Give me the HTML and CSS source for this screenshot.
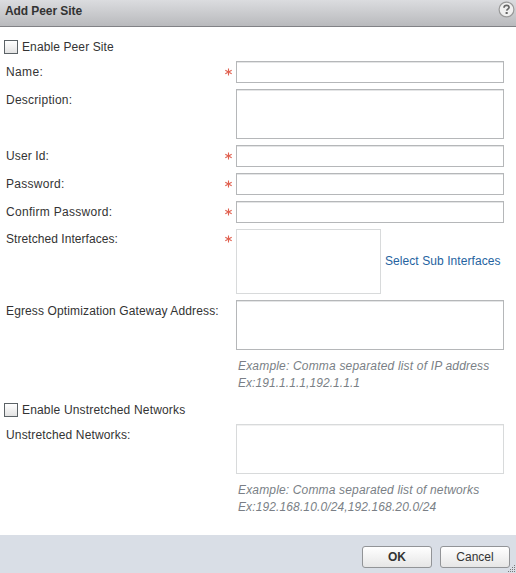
FILE: index.html
```html
<!DOCTYPE html>
<html lang="en">
<head>
<meta charset="utf-8">
<title>Add Peer Site</title>
<link rel="stylesheet" href="styles.css">
</head>
<body>
<div class="dialog">
  <header class="titlebar">
    <h1><span class="title">Add Peer Site</span></h1>
    <svg class="help" width="17" height="17" viewBox="0 0 17 17" aria-label="Help"><circle cx="8.5" cy="8.5" r="7.4" fill="#f0f0f0" stroke="#999" stroke-width="1.2"/><path d="M6 6.7C6.1 4.9 7.2 4.4 8.6 4.4C10.2 4.4 11.1 5.1 11.1 6.3C11.1 8.1 8.9 8.1 8.7 9.7" fill="none" stroke="#666" stroke-width="1.7"/><path d="M7.6 11h2.1v2H7.6z" fill="#666"/></svg>
  </header>
  <main class="form">
    <label class="check"><span class="box"></span><span class="t-enable">Enable Peer Site</span></label>
    <div class="row"><span class="label"><span class="t-name">Name:</span></span><svg class="req" width="7" height="8" viewBox="0 0 7 8"><path d="M3.5 .5v7M.3 2.3l6.4 3.4M6.7 2.3L.3 5.7"/></svg><div class="field"></div></div>
    <div class="row"><span class="label"><span class="t-desc">Description:</span></span><div class="field area"></div></div>
    <div class="row"><span class="label"><span class="t-user">User Id:</span></span><svg class="req" width="7" height="8" viewBox="0 0 7 8"><path d="M3.5 .5v7M.3 2.3l6.4 3.4M6.7 2.3L.3 5.7"/></svg><div class="field"></div></div>
    <div class="row"><span class="label"><span class="t-pass">Password:</span></span><svg class="req" width="7" height="8" viewBox="0 0 7 8"><path d="M3.5 .5v7M.3 2.3l6.4 3.4M6.7 2.3L.3 5.7"/></svg><div class="field"></div></div>
    <div class="row"><span class="label"><span class="t-confirm">Confirm Password:</span></span><svg class="req" width="7" height="8" viewBox="0 0 7 8"><path d="M3.5 .5v7M.3 2.3l6.4 3.4M6.7 2.3L.3 5.7"/></svg><div class="field"></div></div>
    <div class="row interfaces"><span class="label"><span class="t-stretched">Stretched Interfaces:</span></span><svg class="req" width="7" height="8" viewBox="0 0 7 8"><path d="M3.5 .5v7M.3 2.3l6.4 3.4M6.7 2.3L.3 5.7"/></svg><div class="field list"></div><a class="link"><span class="t-select">Select Sub Interfaces</span></a></div>
    <div class="row"><span class="label"><span class="t-egress">Egress Optimization Gateway Address:</span></span><div class="field area"></div></div>
    <div class="hint"><p><span class="t-hint1">Example: Comma separated list of IP address</span></p><p><span class="t-hint2">Ex:191.1.1.1,192.1.1.1</span></p></div>
    <label class="check second"><span class="box"></span><span class="t-enable2">Enable Unstretched Networks</span></label>
    <div class="row"><span class="label"><span class="t-unstretched">Unstretched Networks:</span></span><div class="field area disabled"></div></div>
    <div class="hint"><p><span class="t-hint3">Example: Comma separated list of networks</span></p><p><span class="t-hint4">Ex:192.168.10.0/24,192.168.20.0/24</span></p></div>
  </main>
  <footer class="footer">
    <button class="btn primary">OK</button>
    <button class="btn">Cancel</button>
    <svg class="grip" width="8" height="8" viewBox="0 0 8 8"><path d="M6 0h1v1H6zM4 2h1v1H4zM6 2h1v1H6zM2 4h1v1H2zM4 4h1v1H4zM6 4h1v1H6zM0 6h1v1H0zM2 6h1v1H2zM4 6h1v1H4zM6 6h1v1H6z" fill="#777"/></svg>
  </footer>
</div>
</body>
</html>
```
FILE: styles.css
```css
* { box-sizing: border-box; }
body { margin: 0; background: #fff; color: #333; font: 12px/16px "Liberation Sans", Arial, sans-serif; }
.dialog { width: 516px; height: 573px; display: flex; flex-direction: column; overflow: hidden; position: relative; }
.titlebar { height: 27px; flex: none; display: flex; justify-content: space-between; padding: 1px 1px 0 5px; background: linear-gradient(#dbdcdf, #b9babd); border-bottom: 1px solid #818286; }
h1 { margin: 2px 0 0; font-size: 12px; line-height: 16px; }
.form { flex: 1; padding: 12px 12px 0 4px; }
.check { display: flex; align-items: center; height: 16px; gap: 4px; margin-bottom: 6px; }
.box { width: 14px; height: 14px; border: 1px solid #5b6266; background: linear-gradient(#fff, #e3e3e3); }
.row { display: flex; align-items: flex-start; margin-bottom: 6px; }
.label { width: 221px; padding: 3px 0 0 2px; white-space: nowrap; }
.req { margin: 7px 4px 0 0; fill: none; stroke: #e0604f; stroke-width: 1.1; }
.field { width: 268px; height: 22px; margin-left: auto; background: #fff; border: 1px solid #b5b7b9; box-shadow: inset 0 1px 0 #e4e5e6; }
.area { height: 50px; }
.list { width: 145px; height: 65px; margin-left: 0; border-color: #d8dadb; box-shadow: none; }
.disabled { border-color: #d8dadb; box-shadow: inset 0 1px 0 #f1f1f1; }
.interfaces .label { padding-top: 2px; }
.interfaces .req { margin-top: 6px; }
.link { margin: 24px 0 0 4px; color: #25639f; white-space: nowrap; }
.hint { margin: 8px 0 0 234px; color: #7a7f86; font-style: italic; line-height: 17px; white-space: nowrap; }
.hint p { margin: 0; }
.second { margin: 10px 0 6px; }
.footer { height: 38px; flex: none; display: flex; align-items: flex-start; justify-content: flex-end; gap: 8px; padding: 11px 6px 0 0; background: #d9dee6; }
.btn { width: 70px; height: 22px; padding: 0; border: 1px solid #929497; border-radius: 3px; background: linear-gradient(#fff, #e6e6e6); color: #333; font: 12px/18px "Liberation Sans", Arial, sans-serif; }
.primary { font-weight: bold; }
.grip { position: absolute; right: 0; bottom: 0; }
.title { letter-spacing: -.08px; }
.t-enable { letter-spacing: .11px; }
.t-name { letter-spacing: .35px; }
.t-desc { letter-spacing: .25px; }
.t-user { letter-spacing: .12px; }
.t-pass { letter-spacing: .28px; }
.t-confirm { letter-spacing: .29px; }
.t-stretched { letter-spacing: .06px; }
.t-select { letter-spacing: .07px; }
.t-egress { letter-spacing: .13px; }
.t-enable2 { letter-spacing: .17px; }
.t-unstretched { letter-spacing: .15px; }
.t-hint1 { letter-spacing: .18px; }
.t-hint2 { letter-spacing: .06px; }
.t-hint3 { letter-spacing: .16px; }
.t-hint4 { letter-spacing: .12px; }
```
